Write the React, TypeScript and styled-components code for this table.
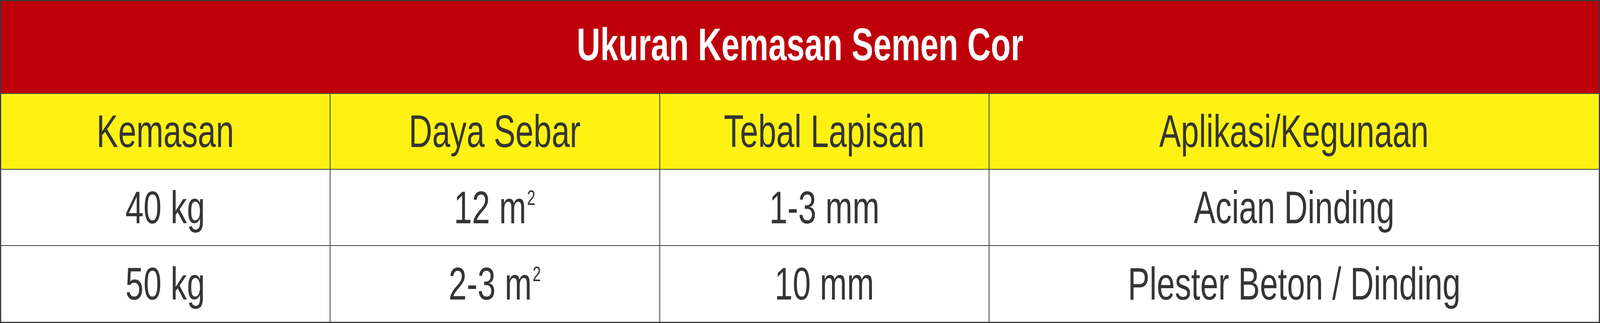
import React, { useEffect, useState } from "react";
import styled, { createGlobalStyle } from "styled-components";

const GlobalStyle = createGlobalStyle`
  html, body {
    margin: 0;
    padding: 0;
    background: #ffffff;
    overflow: hidden;
  }
  body {
    font-family: "Liberation Sans", Arial, sans-serif;
  }
`;

// the design is drawn for a 5705px wide frame; when the window is narrower
// the text is squeezed by the same ratio so the proportions stay the same
const DESIGN_WIDTH = 5705;

const headers = ["Kemasan", "Daya Sebar", "Tebal Lapisan", "Aplikasi/Kegunaan"];

type Row = { pack: string; spread: string; thick: string; use: string };

const rows: Row[] = [
  { pack: "40 kg", spread: "12 m", thick: "1-3 mm", use: "Acian Dinding" },
  { pack: "50 kg", spread: "2-3 m", thick: "10 mm", use: "Plester Beton / Dinding" },
];

const getRatio = () =>
  Math.min(1, document.documentElement.clientWidth / DESIGN_WIDTH);

export default function App() {
  const [ratio, setRatio] = useState(getRatio);

  useEffect(() => {
    const onResize = () => setRatio(getRatio());
    window.addEventListener("resize", onResize);
    return () => window.removeEventListener("resize", onResize);
  }, []);

  return (
    <>
      <GlobalStyle />
      <Table style={{ "--sx": ratio } as React.CSSProperties}>
        <Title>
          <Label>Ukuran Kemasan Semen Cor</Label>
        </Title>
        <Grid>
          {headers.map((h, i) => (
            <HeadCell key={h} $last={i === headers.length - 1}>
              <Label>{h}</Label>
            </HeadCell>
          ))}
          {rows.map((r, ri) => {
            const bottom = ri < rows.length - 1;
            return (
              <React.Fragment key={r.pack}>
                <Cell $bottom={bottom}>
                  <Label>{r.pack}</Label>
                </Cell>
                <Cell $bottom={bottom}>
                  <Label>
                    {r.spread}
                    <Sup>2</Sup>
                  </Label>
                </Cell>
                <Cell $bottom={bottom}>
                  <Label>{r.thick}</Label>
                </Cell>
                <Cell $bottom={bottom} $last>
                  <Label>{r.use}</Label>
                </Cell>
              </React.Fragment>
            );
          })}
        </Grid>
      </Table>
    </>
  );
}

const Table = styled.div`
  box-sizing: border-box;
  width: 100%;
  max-width: 5705px;
  height: 826px;
  border: 3px solid #3c3c3c;
  display: flex;
  flex-direction: column;
  color: #353535;
`;

const Title = styled.div`
  height: 221px;
  padding-bottom: 14px;
  border-bottom: 2px solid #3c3c3c;
  background: #be000a;
  color: #ffffff;
  font-weight: 700;
  font-size: 116px;
  line-height: 1;
  display: flex;
  align-items: center;
  justify-content: center;
`;

const Grid = styled.div`
  display: grid;
  grid-template-columns: 1174fr 1176fr 1175fr 2174fr;
  grid-template-rows: 194px 195px 194px;
`;

const BaseCell = styled.div<{ $last?: boolean; $bottom?: boolean }>`
  box-sizing: border-box;
  min-width: 0;
  display: flex;
  align-items: center;
  justify-content: center;
  font-size: 116px;
  line-height: 1;
  border-right: ${(p) => (p.$last ? "none" : "2px solid #3c3c3c")};
`;

const HeadCell = styled(BaseCell)`
  background: #fff212;
  border-bottom: 2px solid #3c3c3c;
`;

const Cell = styled(BaseCell)`
  background: #ffffff;
  border-bottom: ${(p) => (p.$bottom ? "2px solid #3c3c3c" : "none")};
`;

const Label = styled.span`
  display: inline-block;
  white-space: nowrap;
  transform: scaleX(var(--sx, 1));
`;

const Sup = styled.span`
  font-size: 53px;
  line-height: 0;
  vertical-align: 47px;
  margin-left: 3px;
`;
